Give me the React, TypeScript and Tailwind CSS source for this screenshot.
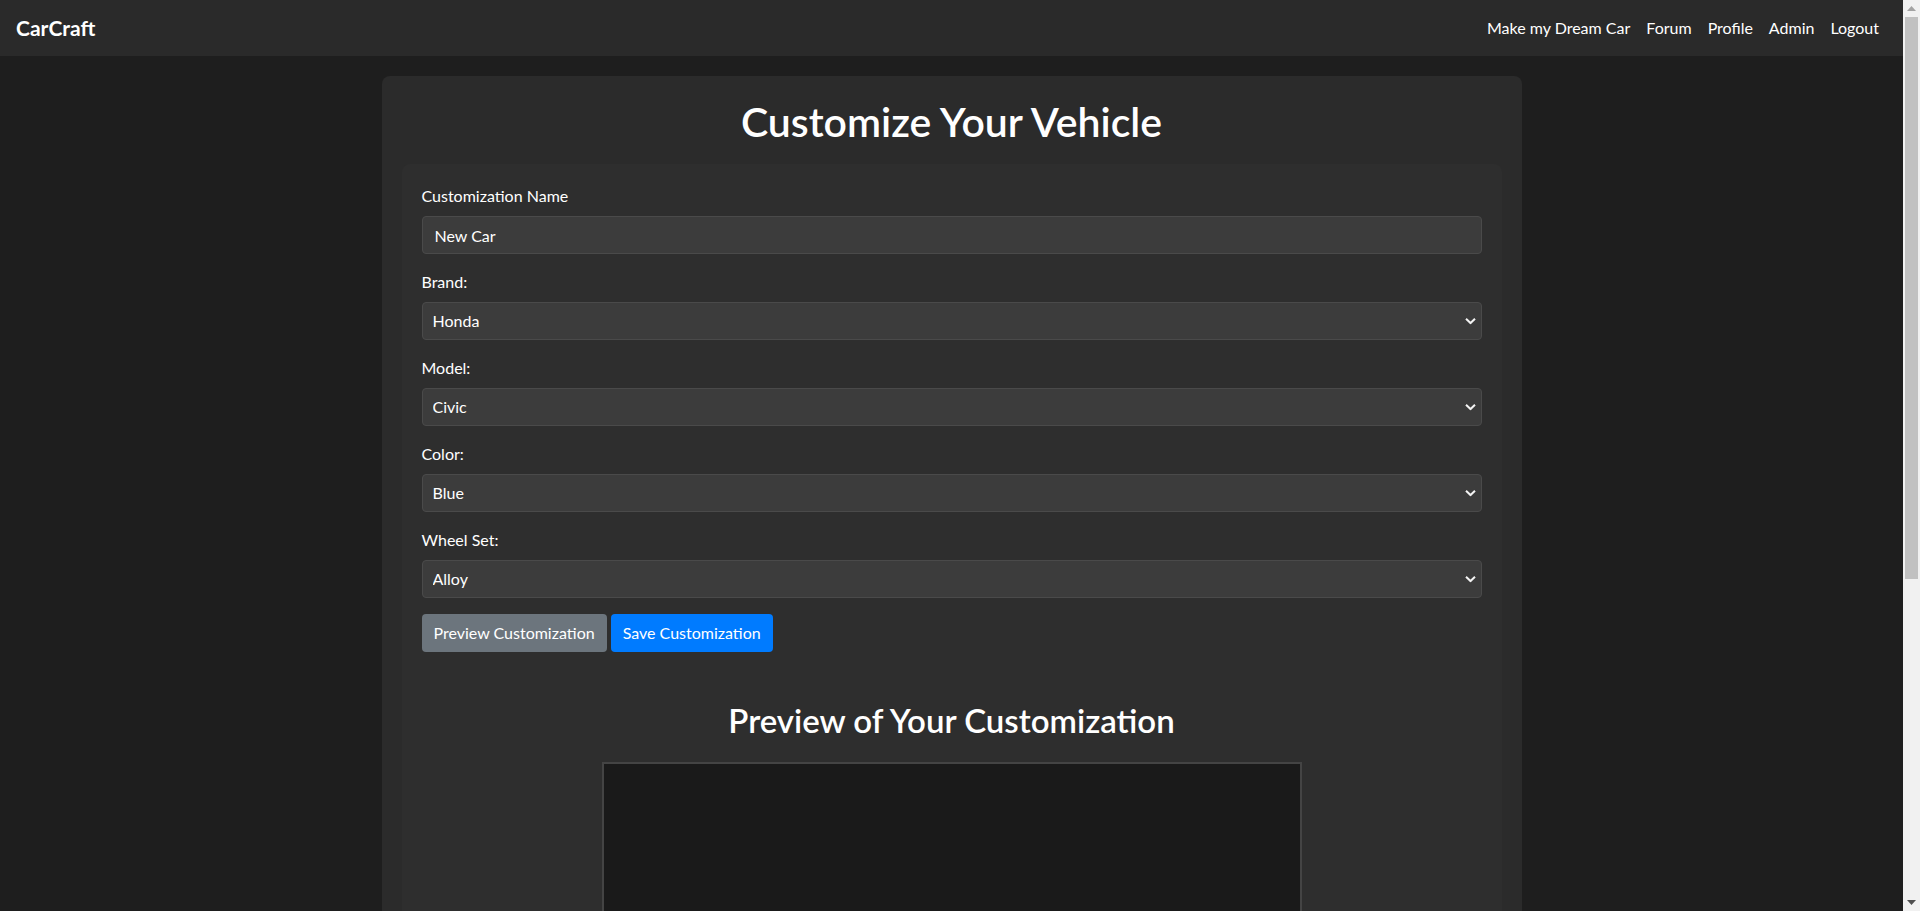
import { useState } from "react";

const brands = ["Honda", "Toyota", "Ford"];
const models = ["Civic", "Accord", "CR-V"];
const colors = ["Blue", "Red", "Black", "White"];
const wheels = ["Alloy", "Steel", "Chrome"];

function Chevron() {
  return (
    <svg
      className="pointer-events-none absolute right-[6px] top-1/2 -translate-y-1/2"
      width="11"
      height="7"
      viewBox="0 0 11 7"
      fill="none"
    >
      <path d="M1 1.2 5.5 5.5 10 1.2" stroke="#f2f2f2" strokeWidth="2" />
    </svg>
  );
}

function SelectField({
  label,
  value,
  options,
  onChange,
}: {
  label: string;
  value: string;
  options: string[];
  onChange: (v: string) => void;
}) {
  return (
    <div className="mb-4">
      <label className="mb-2 block text-base leading-6 text-white">{label}</label>
      <div className="relative">
        <select
          value={value}
          onChange={(e) => onChange(e.target.value)}
          className="block h-[38px] w-full appearance-none rounded border border-[#4a4a4a] bg-[#3c3c3c] pl-[10px] pr-8 text-base text-white outline-none"
        >
          {options.map((o) => (
            <option key={o}>{o}</option>
          ))}
        </select>
        <Chevron />
      </div>
    </div>
  );
}

// fake window scrollbar, so the page keeps the 1903px content width of the shot
function ScrollRail() {
  return (
    <div className="flex h-full w-[17px] shrink-0 flex-col items-center bg-[#f1f1f1]">
      <div className="flex h-[17px] items-center justify-center">
        <svg width="9" height="5" viewBox="0 0 9 5">
          <path d="M0 5 4.5 0 9 5z" fill="#a3a3a3" />
        </svg>
      </div>
      <div className="h-[562px] w-[13px] bg-[#c1c1c1]" />
      <div className="flex-1" />
      <div className="flex h-[17px] items-center justify-center">
        <svg width="9" height="5" viewBox="0 0 9 5">
          <path d="M0 0 4.5 5 9 0z" fill="#505050" />
        </svg>
      </div>
    </div>
  );
}

export default function App() {
  const [name, setName] = useState("New Car");
  const [brand, setBrand] = useState("Honda");
  const [model, setModel] = useState("Civic");
  const [color, setColor] = useState("Blue");
  const [wheel, setWheel] = useState("Alloy");

  return (
    <div className="flex h-screen font-['Lato','Noto_Sans',sans-serif] text-white">
      <div className="min-w-0 flex-1 overflow-y-auto bg-[#1e1e1e] pb-4 [scrollbar-width:none]">
        {/* navbar */}
        <nav className="flex h-14 items-center justify-between bg-[#2a2a2a] px-4">
          <a href="#" className="text-[21px] font-bold text-white">
            CarCraft
          </a>
          <div className="flex text-base">
            {["Make my Dream Car", "Forum", "Profile", "Admin", "Logout"].map((l) => (
              <a key={l} href="#" className="px-2 text-white">
                {l}
              </a>
            ))}
          </div>
        </nav>

        {/* card */}
        <div className="mx-auto mt-5 w-[1140px] rounded-lg bg-[#2b2b2b] p-5">
          <h1 className="mb-[18px] pt-[2px] text-center text-[41px] font-semibold leading-[48px]">
            Customize Your Vehicle
          </h1>

          <div className="rounded-lg bg-[#2e2e2e] px-5 pb-5 pt-5">
            <div className="mb-4">
              <label className="mb-2 block text-base leading-6 text-white">Customization Name</label>
              <input
                value={name}
                onChange={(e) => setName(e.target.value)}
                className="block h-[38px] w-full rounded border border-[#4a4a4a] bg-[#3c3c3c] px-3 text-base text-white outline-none"
              />
            </div>
            <SelectField label="Brand:" value={brand} options={brands} onChange={setBrand} />
            <SelectField label="Model:" value={model} options={models} onChange={setModel} />
            <SelectField label="Color:" value={color} options={colors} onChange={setColor} />
            <SelectField label="Wheel Set:" value={wheel} options={wheels} onChange={setWheel} />

            <div className="flex gap-1">
              <button className="h-[38px] rounded bg-[#6c757d] px-3 text-base text-white">
                Preview Customization
              </button>
              <button className="h-[38px] rounded bg-[#007bff] px-3 text-base text-white">
                Save Customization
              </button>
            </div>

            {/* preview */}
            <div className="mt-[49px]">
              <h2 className="mb-[23px] text-center text-[33px] font-semibold leading-[38px]">
                Preview of Your Customization
              </h2>
              <div className="mx-auto h-[604px] w-[700px] border-2 border-[#444444] bg-[#1a1a1a]" />
            </div>
          </div>
        </div>
      </div>
      <ScrollRail />
    </div>
  );
}
